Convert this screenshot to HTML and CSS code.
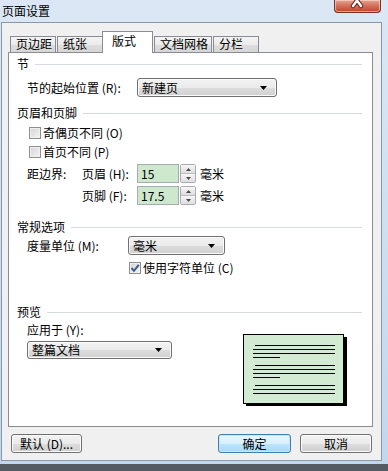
FILE: index.html
```html
<!DOCTYPE html>
<html lang="zh-CN">
<head>
    <meta charset="UTF-8">
    <meta name="viewport" content="width=device-width, initial-scale=1.0">
    <title>页面设置</title>
    <link rel="stylesheet" href="styles.css">
</head>
<body>
    <div class="window">
        <div class="titlebar">
            <span class="title">页面设置</span>
            <div class="close">
                <svg width="45" height="12" viewBox="0 0 45 12">
                    <path d="M18 -5L26 6M26 -5L18 6" stroke="#6e2418" stroke-width="4.5" stroke-linecap="round"/>
                    <path d="M18 -5L26 6M26 -5L18 6" stroke="#fff" stroke-width="2.4" stroke-linecap="round"/>
                </svg>
            </div>
        </div>
        <div class="client">
            <div class="tabs">
                <div class="tab">页边距</div>
                <div class="tab">纸张</div>
                <div class="tab active">版式</div>
                <div class="tab">文档网格</div>
                <div class="tab">分栏</div>
            </div>

            <div class="panel">
                <div class="group">节<span class="rule"></span></div>
                <div class="row first">
                    <span class="label w-start">节的起始位置 (R):</span>
                    <div class="combo w-start-combo">新建页
                        <svg class="arrow" width="7" height="4" viewBox="0 0 7 4"><path d="M0 0H7L3.5 4Z"/></svg>
                    </div>
                </div>

                <div class="group g-header">页眉和页脚<span class="rule"></span></div>
                <div class="check-row cb-odd"><span class="box"></span>奇偶页不同 (O)</div>
                <div class="check-row cb-first"><span class="box"></span>首页不同 (P)</div>
                <div class="row margin-row">
                    <span class="label col-a">距边界:</span>
                    <span class="label col-b">页眉 (H):</span>
                    <input class="spin-field" type="text" value="15" readonly>
                    <div class="spinner">
                        <span><svg width="5" height="3" viewBox="0 0 5 3"><path d="M0 3H5L2.5 0Z"/></svg></span>
                        <span><svg width="5" height="3" viewBox="0 0 5 3"><path d="M0 0H5L2.5 3Z"/></svg></span>
                    </div>
                    <span class="unit">毫米</span>
                </div>
                <div class="row margin-row second">
                    <span class="label col-a"></span>
                    <span class="label col-b">页脚 (F):</span>
                    <input class="spin-field" type="text" value="17.5" readonly>
                    <div class="spinner">
                        <span><svg width="5" height="3" viewBox="0 0 5 3"><path d="M0 3H5L2.5 0Z"/></svg></span>
                        <span><svg width="5" height="3" viewBox="0 0 5 3"><path d="M0 0H5L2.5 3Z"/></svg></span>
                    </div>
                    <span class="unit">毫米</span>
                </div>

                <div class="group g-general">常规选项<span class="rule"></span></div>
                <div class="row unit-row">
                    <span class="label w-unit">度量单位 (M):</span>
                    <div class="combo w-unit-combo">毫米
                        <svg class="arrow" width="7" height="4" viewBox="0 0 7 4"><path d="M0 0H7L3.5 4Z"/></svg>
                    </div>
                </div>
                <div class="check-row cb-chars">
                    <span class="box">
                        <svg width="10" height="10" viewBox="0 0 10 10"><path d="M1.5 5L4 7.8L8.8 1.8" fill="none" stroke="#3d5a8a" stroke-width="2"/></svg>
                    </span>使用字符单位 (C)
                </div>

                <div class="group g-preview">预览<span class="rule"></span></div>
                <div class="preview-row">
                    <div class="preview-left">
                        <div class="label">应用于 (Y):</div>
                        <div class="combo w-apply">整篇文档
                            <svg class="arrow" width="7" height="4" viewBox="0 0 7 4"><path d="M0 0H7L3.5 4Z"/></svg>
                        </div>
                    </div>
                    <svg class="page" width="104" height="72" viewBox="0 0 104 72">
                        <rect x="3" y="3" width="101" height="69" fill="#000"/>
                        <rect x="0.5" y="0.5" width="100" height="69" fill="#d3ead3" stroke="#000"/>
                        <path d="M12 11.5H92M10 15.5H92M10 19.5H92M10 23.5H37M12 31.5H92M10 35.5H92M10 39.5H92M10 43.5H37M12 51.5H92M10 55.5H92M10 59.5H92" stroke="#000"/>
                    </svg>
                </div>
            </div>

            <div class="buttons">
                <div class="button b-default">默认 (D)...</div>
                <div class="button b-ok focus">确定</div>
                <div class="button b-cancel">取消</div>
            </div>
        </div>
    </div>
</body>
</html>
```

FILE: styles.css
```css
* {
    box-sizing: border-box;
}

body {
    margin: 0;
    width: 388px;
    height: 471px;
    overflow: hidden;
    background: linear-gradient(#3f454d, #555b63);
    font-family: "Noto Sans CJK SC", sans-serif;
    font-size: 12px;
    color: #000;
}

.window {
    height: 464px;
    padding: 0 6px 3px 1px;
    background: linear-gradient(#dbe7f4, #c3d7ec);
    display: flex;
    flex-direction: column;
}

.titlebar {
    height: 22px;
    display: flex;
    align-items: flex-start;
}

.title {
    margin: 3px 0 0 1px;
    line-height: 15px;
}

.close {
    margin-left: auto;
    margin-right: 1px;
    width: 47px;
    height: 13px;
    border: 1px solid #7a3024;
    border-top: none;
    border-radius: 0 0 4px 4px;
    background: linear-gradient(#e3a594, #d06a52 55%, #bf432c);
    box-shadow: inset 0 0 0 1px rgba(255, 220, 210, 0.6);
    overflow: hidden;
}

.close svg {
    display: block;
}

.client {
    flex: 1;
    background-color: #f0f0f0;
    border: 1px solid #8798ab;
    padding: 8px 8px 0 6px;
    display: flex;
    flex-direction: column;
}

/* pestañas */
.tabs {
    height: 21px;
    margin-left: 2px;
    display: flex;
    align-items: flex-end;
    position: relative;
    z-index: 1;
}

.tab {
    height: 16px;
    min-width: 46px;
    padding: 0 3px 0 5px;
    margin-right: 1px;
    border: 1px solid #898c95;
    border-bottom: none;
    background: linear-gradient(#f4f4f4, #ebebeb 50%, #dedede 51%, #d6d6d6);
    line-height: 14px;
    white-space: nowrap;
}

.tab.active {
    height: 22px;
    min-width: 51px;
    margin: 0 1px -1px -2px;
    padding: 0 9px;
    background: #fff;
    line-height: 18px;
}

.panel {
    height: 375px;
    border: 1px solid #898c95;
    background-color: #fff;
    padding: 4px 10px 0 8px;
}

.group {
    height: 14px;
    line-height: 14px;
    display: flex;
    align-items: center;
}

.rule {
    flex: 1;
    height: 1px;
    margin-left: 6px;
    background-color: #d5dadf;
}

.g-header {
    margin-top: 9px;
}

.g-general {
    margin-top: 15px;
}

.g-preview {
    margin-top: 30px;
}

.row {
    height: 19px;
    margin-left: 10px;
    display: flex;
    align-items: center;
}

.row.first {
    margin-top: 7px;
}

.label {
    flex-shrink: 0;
    line-height: 14px;
    white-space: nowrap;
}

.w-start {
    width: 110px;
}

.w-unit {
    width: 101px;
}

.col-a,
.col-b {
    width: 55px;
}

.combo {
    height: 19px;
    padding: 0 9px 0 4px;
    border: 1px solid #707070;
    border-radius: 3px;
    background: linear-gradient(#f2f2f2, #ebebeb 50%, #dddddd 51%, #d0d0d0);
    box-shadow: inset 0 0 0 1px #fbfbfb;
    display: flex;
    align-items: center;
    justify-content: space-between;
    line-height: 16px;
}

.w-start-combo {
    width: 140px;
}

.w-unit-combo {
    width: 97px;
}

.w-apply {
    width: 145px;
    height: 18px;
    margin-top: 4px;
}

.arrow {
    display: block;
}

.check-row {
    height: 14px;
    margin-left: 12px;
    display: flex;
    align-items: center;
    line-height: 14px;
}

.cb-odd {
    margin-top: 6px;
}

.cb-first {
    margin-top: 5px;
}

.cb-chars {
    margin-top: 6px;
    margin-left: 112px;
}

.box {
    width: 12px;
    height: 12px;
    margin-right: 2px;
    border: 1px solid #8e8f8f;
    background: linear-gradient(135deg, #d4d4d4, #f4f4f4);
    box-shadow: inset 0 0 0 1px #f0f0f0;
    display: flex;
    align-items: center;
    justify-content: center;
}

.box svg {
    display: block;
}

.margin-row {
    margin-top: 5px;
}

.margin-row.second {
    margin-top: 3px;
}

.spin-field {
    width: 42px;
    height: 19px;
    margin: 0;
    padding: 0 3px;
    border: 1px solid #a6abb3;
    background-color: #cde8cd;
    font-family: inherit;
    font-size: 12px;
    color: #000;
    outline: none;
}

.spinner {
    width: 16px;
    height: 19px;
    margin-left: 1px;
    border: 1px solid #a9acb2;
    border-radius: 2px;
    display: flex;
    flex-direction: column;
}

.spinner span {
    flex: 1;
    display: flex;
    align-items: center;
    justify-content: center;
    background: linear-gradient(#f7f7f7, #dedede);
}

.spinner span:first-child {
    border-bottom: 1px solid #b9bcc1;
}

.spinner svg {
    display: block;
    fill: #4a4a4a;
}

.unit {
    margin-left: 4px;
    line-height: 14px;
}

.unit-row {
    margin-top: 2px;
}

.preview-row {
    margin-top: 4px;
    display: flex;
}

.preview-left {
    width: 216px;
    margin-left: 10px;
}

.page {
    display: block;
    margin-top: 11px;
}

/* botones de abajo */
.buttons {
    height: 19px;
    margin-top: 7px;
    display: flex;
}

.button {
    height: 19px;
    border: 1px solid #707070;
    border-radius: 3px;
    background: linear-gradient(#f2f2f2, #ebebeb 50%, #dddddd 51%, #cfcfcf);
    box-shadow: inset 0 0 0 1px #fcfcfc;
    text-align: center;
    line-height: 17px;
}

.button.focus {
    border-color: #3c7fb1;
    background: linear-gradient(#eaf6fd, #d9f0fc 50%, #bee6fd 51%, #a7d9f5);
    box-shadow: inset 0 0 0 1px #c4e7fa;
}

.b-default {
    width: 71px;
    margin-left: 3px;
}

.b-ok {
    width: 73px;
    margin-left: auto;
}

.b-cancel {
    width: 72px;
    margin-left: 9px;
    margin-right: 1px;
}
```
